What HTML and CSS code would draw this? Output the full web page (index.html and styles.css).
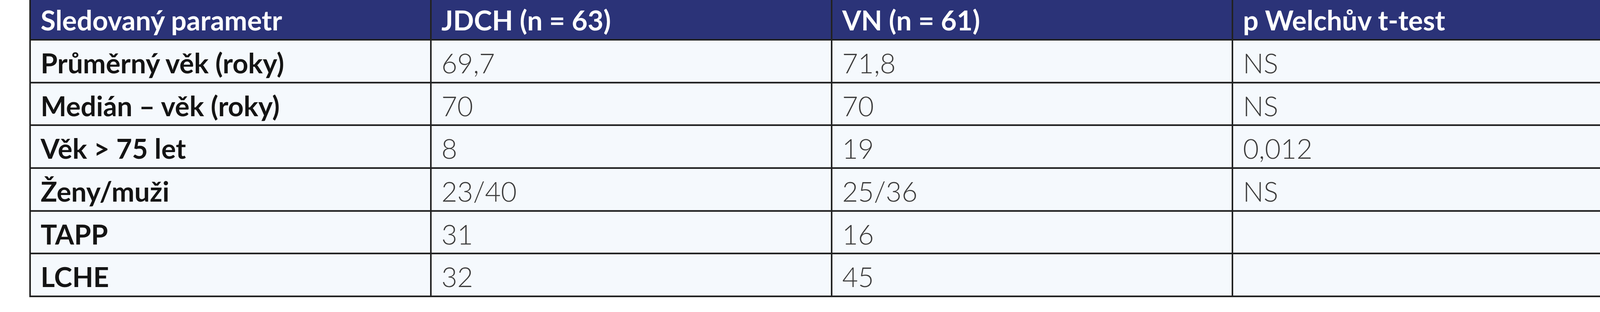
FILE: index.html
```html
<!DOCTYPE html>
<html lang="cs">
<head>
<meta charset="utf-8">
<title>Tabulka</title>
<link rel="stylesheet" href="styles.css">
</head>
<body>
<div class="table">
  <div class="cell head">Sledovaný parametr</div>
  <div class="cell head">JDCH (n = 63)</div>
  <div class="cell head">VN (n = 61)</div>
  <div class="cell head">p Welchův t-test</div>

  <div class="cell label">Průměrný věk (roky)</div>
  <div class="cell val">69,7</div>
  <div class="cell val">71,8</div>
  <div class="cell val">NS</div>

  <div class="cell label">Medián – věk (roky)</div>
  <div class="cell val">70</div>
  <div class="cell val">70</div>
  <div class="cell val">NS</div>

  <div class="cell label">Věk &gt; 75 let</div>
  <div class="cell val">8</div>
  <div class="cell val">19</div>
  <div class="cell val">0,012</div>

  <div class="cell label">Ženy/muži</div>
  <div class="cell val">23/40</div>
  <div class="cell val">25/36</div>
  <div class="cell val">NS</div>

  <div class="cell label">TAPP</div>
  <div class="cell val">31</div>
  <div class="cell val">16</div>
  <div class="cell val"></div>

  <div class="cell label">LCHE</div>
  <div class="cell val">32</div>
  <div class="cell val">45</div>
  <div class="cell val"></div>
</div>
</body>
</html>
```
FILE: styles.css
```css
html, body {
  margin: 0;
  padding: 0;
  background: #ffffff;
}

body {
  font-family: Lato, "Open Sans", "Liberation Sans", sans-serif;
}

.table {
  display: grid;
  grid-template-columns: repeat(4, 1022px);
  grid-template-rows: 100px repeat(6, 105.7px);
  gap: 4px;
  width: max-content;
  margin-left: 75px;
  padding: 0 4px 4px 4px;
  background: #222222;
}

.cell {
  box-sizing: border-box;
  padding-left: 25px;
  font-size: 70px;
  line-height: 70px;
  white-space: nowrap;
  overflow: hidden;
}

.head {
  background: #2b3378;
  color: #ffffff;
  font-weight: 700;
  padding-top: 16px;
}

.label,
.val {
  background: #f5f9fd;
  padding-top: 22px;
  box-shadow: inset 0 -1px 0 #c4c7cb;
}

.label {
  color: #141414;
  font-weight: 700;
}

.val {
  color: #3c3c3c;
  font-weight: 300;
}
```
